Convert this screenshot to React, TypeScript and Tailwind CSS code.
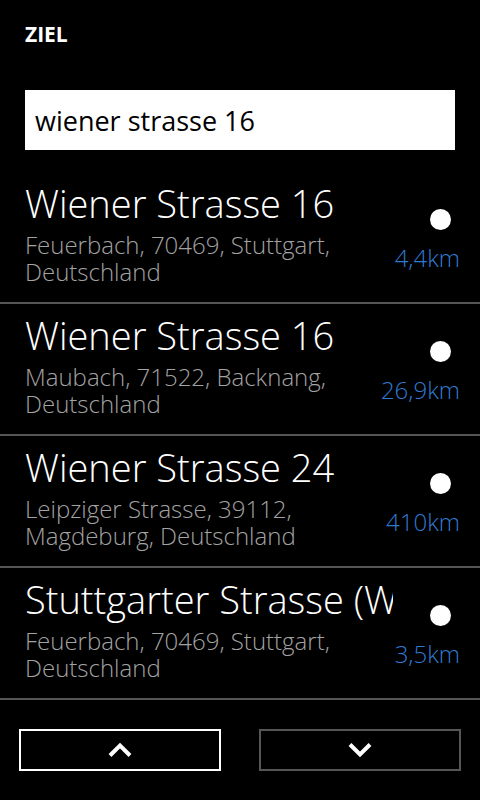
import React from "react";

type Result = { title: string; line1: string; line2: string; dist: string };

const results: Result[] = [
  { title: "Wiener Strasse 16", line1: "Feuerbach, 70469, Stuttgart,", line2: "Deutschland", dist: "4,4km" },
  { title: "Wiener Strasse 16", line1: "Maubach, 71522, Backnang,", line2: "Deutschland", dist: "26,9km" },
  { title: "Wiener Strasse 24", line1: "Leipziger Strasse, 39112,", line2: "Magdeburg, Deutschland", dist: "410km" },
  { title: "Stuttgarter Strasse (Wangen)", line1: "Feuerbach, 70469, Stuttgart,", line2: "Deutschland", dist: "3,5km" },
];

function Chevron({ up }: { up?: boolean }) {
  return (
    <svg width="26" height="16" viewBox="0 0 26 16" fill="none">
      <path
        d={up ? "M3 13.5 L13 3.5 L23 13.5" : "M3 2.5 L13 12.5 L23 2.5"}
        stroke="white"
        strokeWidth="4"
        strokeLinejoin="miter"
      />
    </svg>
  );
}

export default function App() {
  return (
    <div
      className="w-[480px] h-[800px] bg-black text-white overflow-hidden flex flex-col"
      style={{ fontFamily: '"Open Sans", "Noto Sans", sans-serif' }}
    >
      <div className="px-[25px] pt-[20px] h-[90px]">
        <h1 className="text-[21px] font-bold leading-[28px]">ZIEL</h1>
      </div>

      <div className="mx-[25px] h-[60px] bg-white flex items-center px-[10px]">
        <span className="text-black text-[27px] leading-none">wiener strasse 16</span>
      </div>

      <div className="mt-[22px] flex flex-col">
        {results.map((r, i) => (
          <div key={i} className="h-[132px] border-b-2 border-[#555555] flex pl-[25px] pr-[20px] pt-[8px]">
            <div className="w-[368px] shrink-0 overflow-hidden">
              <div className="text-[38px] font-light leading-[46px] whitespace-nowrap">{r.title}</div>
              <div className="mt-[5px] text-[24px] font-light leading-[27px] text-[#a3a3a3] whitespace-nowrap">
                <div>{r.line1}</div>
                <div>{r.line2}</div>
              </div>
            </div>
            <div className="w-[90px] -ml-[23px] shrink-0 flex flex-col items-end pt-[29px]">
              <div className="w-[21px] h-[21px] rounded-full bg-white mr-[9px]" />
              <div className="mt-[14px] text-[24px] font-light leading-[28px] text-[#2f7ad1] whitespace-nowrap">{r.dist}</div>
            </div>
          </div>
        ))}
      </div>

      <div className="flex justify-between px-[19px] mt-[29px]">
        <button className="w-[202px] h-[42px] border-2 border-white flex items-center justify-center">
          <Chevron up />
        </button>
        <button className="w-[202px] h-[42px] border-2 border-[#555555] flex items-center justify-center">
          <Chevron />
        </button>
      </div>
    </div>
  );
}
